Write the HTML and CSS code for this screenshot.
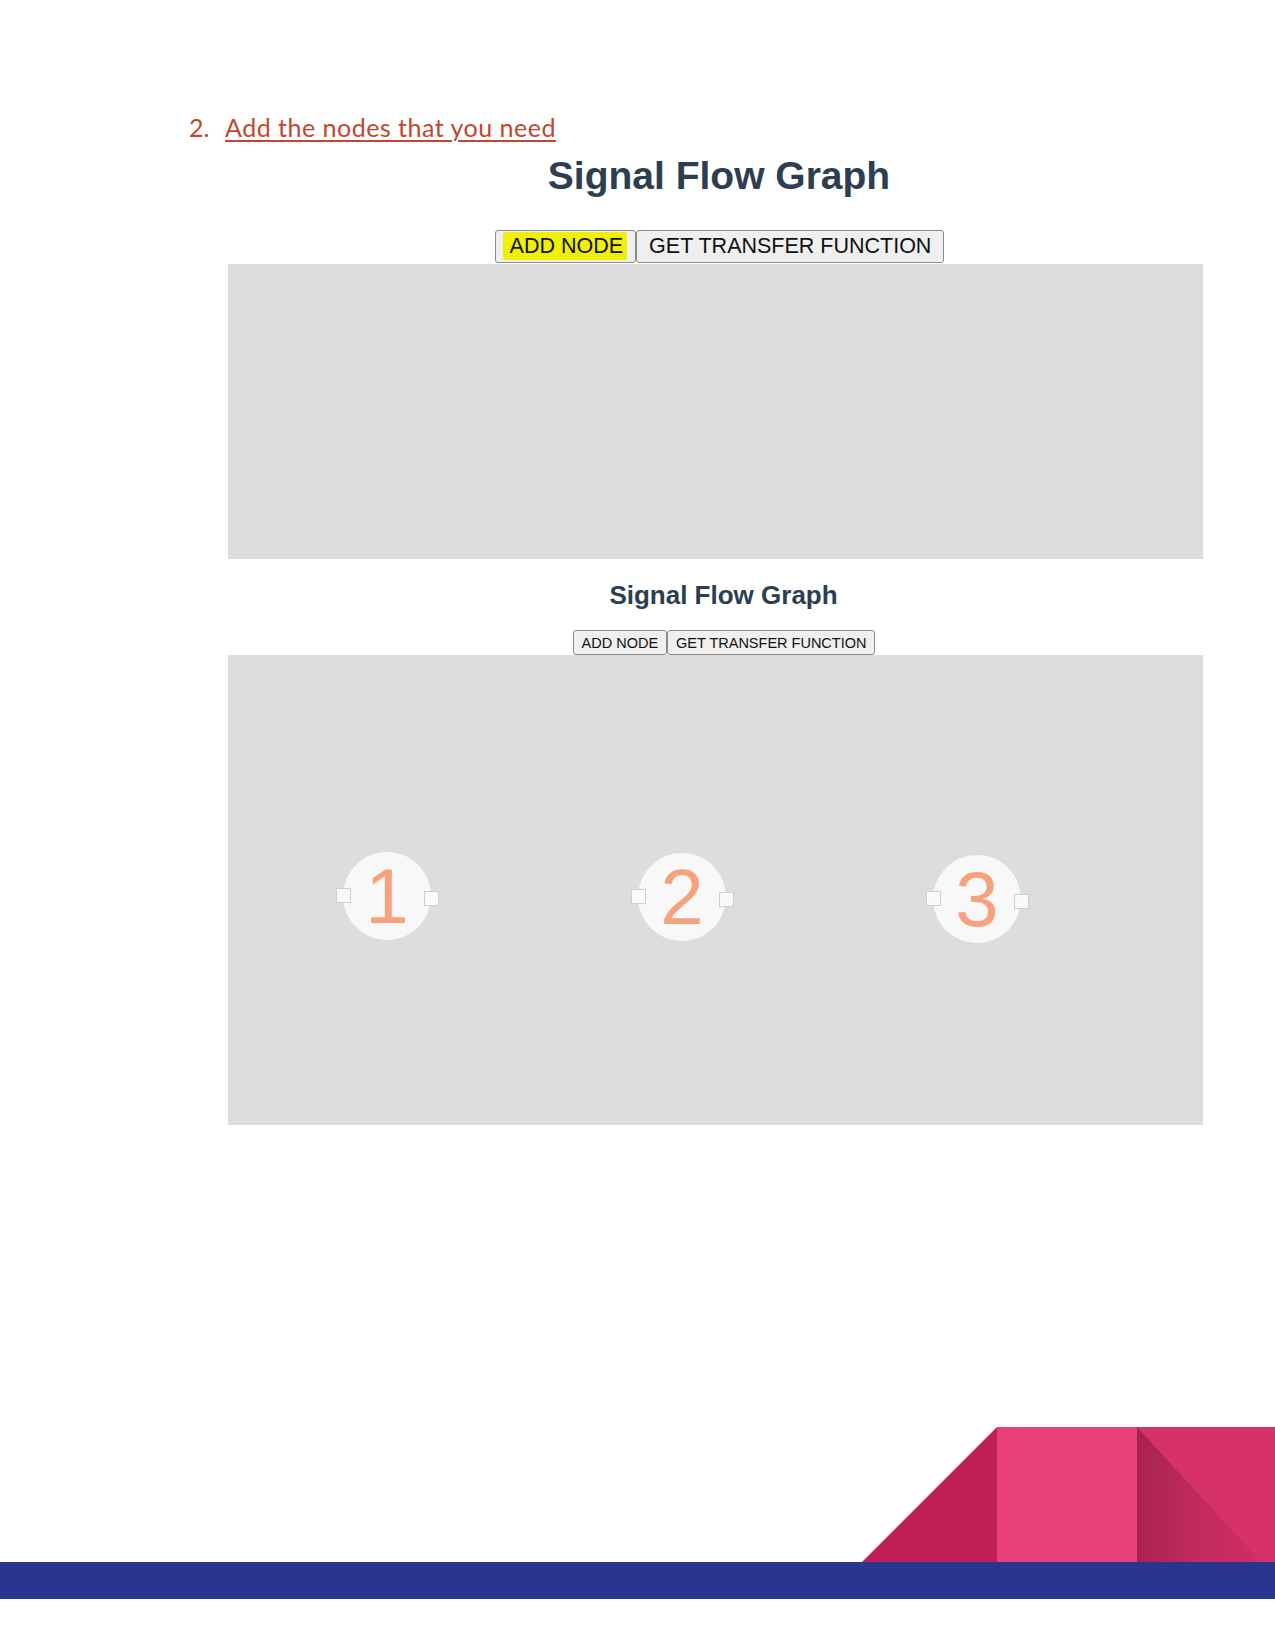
FILE: index.html
```html
<!DOCTYPE html>
<html lang="en">
<head>
<meta charset="utf-8">
<title>Signal Flow Graph</title>
<link rel="stylesheet" href="styles.css">
</head>
<body>
<div class="page">
  <div class="step">
    <span class="step-num">2.</span>
    <a class="step-link" href="#">Add the nodes that you need</a>
  </div>

  <section class="app app-large">
    <h1 class="title">Signal Flow Graph</h1>
    <div class="toolbar">
      <button class="btn" type="button"><span class="hl">ADD NODE</span></button><button class="btn" type="button">GET TRANSFER FUNCTION</button>
    </div>
    <div class="canvas canvas-empty"></div>
  </section>

  <section class="app app-small">
    <h2 class="title">Signal Flow Graph</h2>
    <div class="toolbar">
      <button class="btn" type="button">ADD NODE</button><button class="btn" type="button">GET TRANSFER FUNCTION</button>
    </div>
    <div class="canvas canvas-nodes">
      <div class="node n1"><span class="port port-in"></span><span class="digit">1</span><span class="port port-out"></span></div>
      <div class="node n2"><span class="port port-in"></span><span class="digit">2</span><span class="port port-out"></span></div>
      <div class="node n3"><span class="port port-in"></span><span class="digit">3</span><span class="port port-out"></span></div>
    </div>
  </section>

  <footer class="footer">
    <div class="shapes">
      <div class="tri"></div>
      <div class="mid"></div>
      <div class="right"></div>
    </div>
    <div class="bar"></div>
  </footer>
</div>
</body>
</html>
```
FILE: styles.css
```css
html, body {
  margin: 0;
  padding: 0;
  background: #ffffff;
}

.page {
  width: 1275px;
  height: 1650px;
  display: flex;
  flex-direction: column;
  font-family: "Liberation Sans", Arial, sans-serif;
}

.step {
  margin-top: 112px;
  padding-left: 189px;
  display: flex;
  align-items: baseline;
  font-family: Lato, "Open Sans", sans-serif;
  font-size: 25px;
  line-height: 30px;
  color: #c4452f;
}

.step-num {
  width: 36px;
}

.step-link {
  color: #c4452f;
  letter-spacing: 0.5px;
  text-decoration: underline;
  text-decoration-thickness: 1.5px;
  text-underline-offset: 3px;
}

.app {
  margin-left: 228px;
  width: 975px;
  display: flex;
  flex-direction: column;
}

.title {
  margin: 0;
  font-family: "Liberation Sans", Arial, sans-serif;
  font-weight: bold;
  color: #2c3e50;
  text-align: center;
}

.app-large .title {
  margin-top: 12px;
  font-size: 39px;
  line-height: 44px;
  padding-left: 7px;
}

.app-large .toolbar {
  margin-top: 32px;
  padding-left: 8px;
  margin-bottom: 1px;
}

.app-small {
  margin-top: 21px;
}

.app-small .title {
  font-size: 26px;
  line-height: 30px;
  padding-left: 16px;
}

.app-small .toolbar {
  margin-top: 20px;
  padding-left: 17px;
}

.toolbar {
  display: flex;
  justify-content: center;
}

.btn {
  font-family: "Liberation Sans", Arial, sans-serif;
  color: #111111;
  background: #efefef;
  border: 1px solid #8a8a8a;
  border-radius: 3px;
  margin: 0;
  cursor: pointer;
}

.app-large .btn {
  font-size: 21.5px;
  height: 33px;
  padding: 0 12px;
}

.app-small .btn {
  font-size: 14.5px;
  height: 25px;
  padding: 0 8px;
}

.hl {
  background: #f0ef06;
  padding: 2px 4px 2px 7px;
  margin-left: -5px;
  margin-right: -4px;
  border-radius: 2px;
}

.canvas {
  background: #dddddd;
  position: relative;
}

.canvas-empty {
  height: 295px;
}

.canvas-nodes {
  height: 470px;
}

.node {
  position: absolute;
  width: 88px;
  height: 88px;
  border-radius: 50%;
  background: #f8f8f8;
  display: flex;
  align-items: center;
  justify-content: center;
}

.n1 { left: 115px; top: 197px; }
.n2 { left: 410px; top: 198px; }
.n3 { left: 705px; top: 200px; }

.digit {
  font-family: "Liberation Sans", Arial, sans-serif;
  font-size: 78px;
  line-height: 1;
  color: #f7a27d;
}

.port {
  position: absolute;
  width: 13px;
  height: 13px;
  background: #fafafa;
  border: 1px solid #cfcfcf;
}

.port-in { left: -7px; top: 36px; }
.port-out { left: 81px; top: 39px; }

.footer {
  margin-top: auto;
  margin-bottom: 51px;
  display: flex;
  flex-direction: column;
}

.shapes {
  height: 135px;
  display: flex;
  padding-left: 862px;
}

.tri {
  width: 135px;
  background: #c01f55;
  clip-path: polygon(100% 0, 100% 100%, 0 100%);
}

.mid {
  width: 140px;
  background: #e9407a;
}

.right {
  flex: 1;
  background: #d63168;
  position: relative;
}

.right::before {
  content: "";
  position: absolute;
  inset: 0;
  background: linear-gradient(to right, #a7234f 0%, #c02a5c 40%, #d22f65 100%);
  clip-path: polygon(0 0, 90% 100%, 0 100%);
}

.bar {
  height: 37px;
  background: #2a3491;
}
```
